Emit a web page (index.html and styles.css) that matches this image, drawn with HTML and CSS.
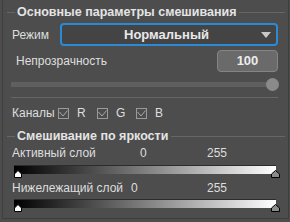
FILE: index.html
```html
<!DOCTYPE html>
<html lang="ru">
<head>
<meta charset="utf-8">
<link rel="stylesheet" href="styles.css">
</head>
<body>
<div class="panel">
  <div class="legend"><span class="dash"></span><span class="ltitle">Основные параметры смешивания</span><span class="rule"></span></div>
  <div class="row mode">
    <span class="lbl">Режим</span>
    <div class="select"><span class="sel-text">Нормальный</span><svg class="caret" width="10" height="6" viewBox="0 0 10 6"><path d="M0 0 H10 L5 6 Z" fill="#c8c8c8"/></svg></div>
  </div>
  <div class="row opacity">
    <span class="lbl">Непрозрачность</span>
    <div class="num">100</div>
  </div>
  <div class="slider"><div class="track"></div><div class="knob"></div></div>
  <div class="divider"></div>
  <div class="row channels">
    <span class="lbl">Каналы</span>
    <span class="cb"><svg width="9" height="7" viewBox="0 0 9 7"><path d="M0.5 2 L4 6 L8.5 0.5" fill="none" stroke="#a8a8a8" stroke-width="1"/></svg></span><span class="ch">R</span>
    <span class="cb"><svg width="9" height="7" viewBox="0 0 9 7"><path d="M0.5 2 L4 6 L8.5 0.5" fill="none" stroke="#a8a8a8" stroke-width="1"/></svg></span><span class="ch">G</span>
    <span class="cb"><svg width="9" height="7" viewBox="0 0 9 7"><path d="M0.5 2 L4 6 L8.5 0.5" fill="none" stroke="#a8a8a8" stroke-width="1"/></svg></span><span class="ch">B</span>
  </div>
  <div class="legend legend2"><span class="dash"></span><span class="ltitle">Смешивание по яркости</span><span class="rule"></span></div>
  <div class="vals vals1"><span class="vname">Активный слой</span><span class="v0">0</span><span class="v255">255</span></div>
  <div class="grad"></div>
  <div class="tris">
    <svg width="8" height="8" viewBox="0 0 8 8"><path d="M4 0.5 L7.5 4 V7.5 H0.5 V4 Z" fill="#fff" stroke="#000" stroke-width="1"/></svg>
    <svg width="9" height="8" viewBox="0 0 9 8"><path d="M4.5 0.5 L8.5 4 V7.5 H0.5 V4 Z" fill="#8a8a8a" stroke="#000" stroke-width="1"/></svg>
  </div>
  <div class="vals vals2"><span class="vname">Нижележащий слой</span><span class="v0">0</span><span class="v255">255</span></div>
  <div class="grad"></div>
  <div class="tris">
    <svg width="8" height="8" viewBox="0 0 8 8"><path d="M4 0.5 L7.5 4 V7.5 H0.5 V4 Z" fill="#fff" stroke="#000" stroke-width="1"/></svg>
    <svg width="9" height="8" viewBox="0 0 9 8"><path d="M4.5 0.5 L8.5 4 V7.5 H0.5 V4 Z" fill="#8a8a8a" stroke="#000" stroke-width="1"/></svg>
  </div>
</div>
</body>
</html>
```

FILE: styles.css
```css
html, body {
  margin: 0;
  padding: 0;
  background: #4d4d4d;
}
body {
  width: 290px;
  height: 222px;
  overflow: hidden;
  font-family: "Liberation Sans", Arial, sans-serif;
  font-size: 12px;
  color: #dedede;
}
.panel {
  margin: 0 1px 0 2px;
  border: 1px solid #3e3e3e;
  border-top: none;
  height: 219px;
  box-sizing: border-box;
  padding-top: 5px;
}
.legend {
  display: flex;
  align-items: center;
  height: 14px;
  padding: 0 3px 0 4px;
}
.dash {
  width: 8px;
  height: 1px;
  background: #666;
}
.ltitle {
  margin: 0 3px 0 2px;
  font-weight: bold;
  font-size: 12.5px;
  color: #e4e4e4;
  white-space: nowrap;
}
.rule {
  flex: 1;
  height: 1px;
  background: #666;
}
.row {
  display: flex;
  align-items: center;
  padding: 0 10px 0 8px;
}
.mode {
  margin-top: 4px;
  height: 23px;
}
.mode .lbl {
  width: 49px;
  padding-left: 1px;
  box-sizing: border-box;
}
.select {
  flex: 1;
  height: 23px;
  box-sizing: border-box;
  border: 2px solid #2b8ad6;
  border-radius: 4px;
  background: #444;
  display: flex;
  align-items: center;
  padding: 0 5px 0 0;
}
.sel-text {
  flex: 1;
  text-align: center;
  font-weight: bold;
  font-size: 13px;
  color: #e8e8e8;
  padding-left: 10px;
}
.caret {
  margin-top: 1px;
}
.opacity {
  margin-top: 4px;
  height: 22px;
  justify-content: space-between;
}
.opacity .lbl {
  padding-left: 5px;
}
.num {
  width: 61px;
  height: 22px;
  box-sizing: border-box;
  border: 1px solid #858585;
  border-radius: 4px;
  background: #6a6a6a;
  text-align: center;
  line-height: 20px;
  font-weight: bold;
  font-size: 13px;
  color: #ececec;
}
.slider {
  margin-top: 6px;
  height: 13px;
  display: flex;
  align-items: center;
  padding: 0 9px 0 8px;
}
.track {
  flex: 1;
  height: 5px;
  background: #5f5f5f;
}
.knob {
  width: 13px;
  height: 13px;
  border-radius: 50%;
  background: #8a8a8a;
  margin-left: -9px;
}
.divider {
  margin: 6px 10px 0 8px;
  height: 1px;
  background: #666;
}
.channels {
  margin-top: 9px;
  height: 12px;
}
.channels .lbl {
  padding-left: 1px;
  width: 46px;
}
.cb {
  width: 9px;
  height: 9px;
  border: 1px solid #9a9a9a;
  display: flex;
  align-items: center;
  justify-content: center;
}
.ch {
  width: 20px;
  margin-left: 8px;
}
.legend2 {
  margin-top: 10px;
}
.vals {
  display: flex;
  align-items: center;
  height: 14px;
  padding-left: 9px;
}
.vals1 {
  margin-top: 3px;
}
.vname {
  width: 128px;
}
.vals2 .vname {
  width: 119px;
}
.v0 {
  width: 76px;
}
.vals2 .v0 {
  width: 76px;
}
.vals1 .v0 {
  width: 67px;
}
.grad {
  margin: 5px 12px 0 11px;
  height: 9px;
  box-sizing: border-box;
  border-top: 1px solid #2c2c2c;
  background: linear-gradient(to right, #000, #fff);
}
.vals2 {
  margin-top: 3px;
}
.vals2 + .grad {
  margin-top: 4px;
}
.tris {
  display: flex;
  justify-content: space-between;
  align-items: flex-end;
  margin-top: -4px;
  padding: 0 8px 0 11px;
  height: 8px;
}
.tris svg {
  display: block;
}
```
